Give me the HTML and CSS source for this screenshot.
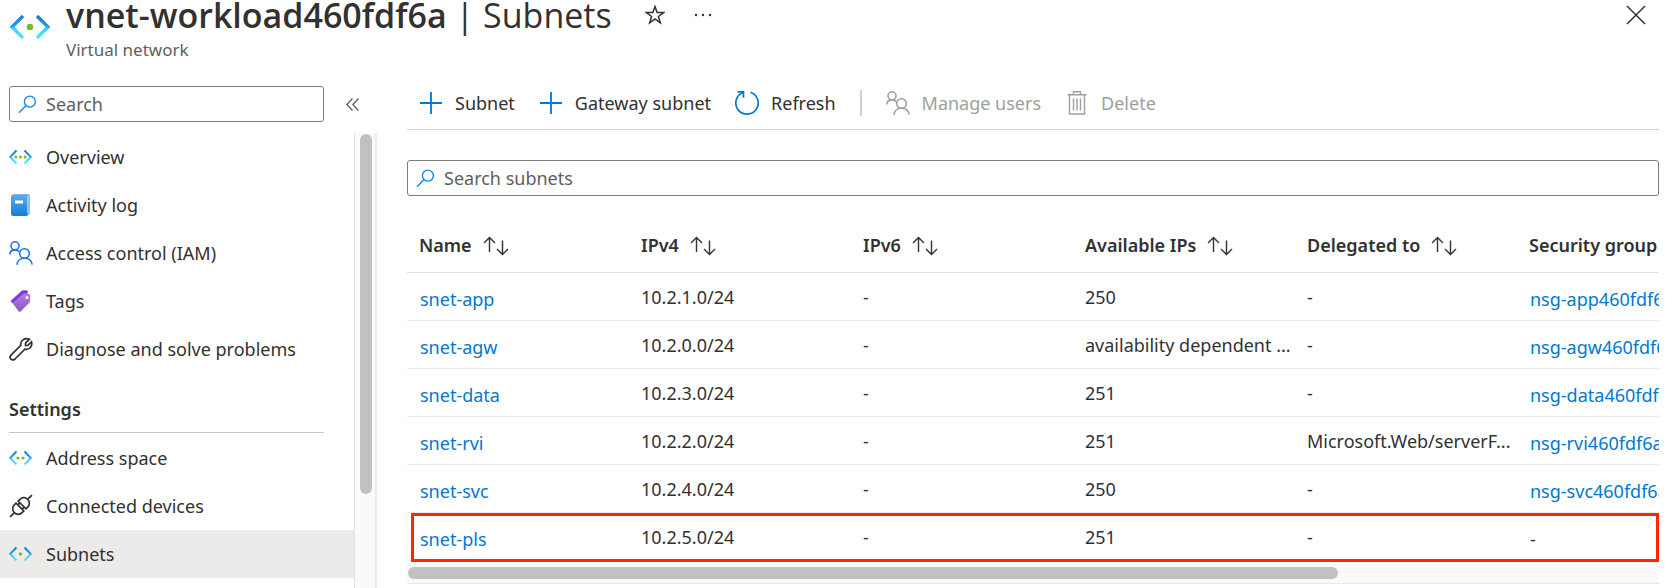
FILE: index.html
```html
<!DOCTYPE html>
<html lang="en">
<head>
<meta charset="utf-8">
<title>vnet-workload460fdf6a | Subnets</title>
<link rel="stylesheet" href="styles.css">
</head>
<body>
<svg class="defs" aria-hidden="true">
  <defs>
    <linearGradient id="bracket" x1="0" y1="0" x2="0" y2="1">
      <stop offset="0" stop-color="#0f7fe0"/><stop offset=".5" stop-color="#2f9cea"/><stop offset=".55" stop-color="#42cdf7"/><stop offset="1" stop-color="#50e6ff"/>
    </linearGradient>
    <linearGradient id="book" x1="0" y1="0" x2="0" y2="1">
      <stop offset="0" stop-color="#5eaaf0"/><stop offset="1" stop-color="#0f80d8"/>
    </linearGradient>
    <linearGradient id="tag" x1="0" y1="0" x2="0" y2="1">
      <stop offset="0" stop-color="#b27fe0"/><stop offset="1" stop-color="#8a55c4"/>
    </linearGradient>
    <symbol id="i-search" viewBox="0 0 20 20"><circle cx="12.5" cy="7" r="5.8" fill="none" stroke="currentColor" stroke-width="1.5"/><path d="M8.3 11.3 1 18.6" fill="none" stroke="currentColor" stroke-width="1.5"/></symbol>
    <symbol id="i-sort" viewBox="0 0 26 20"><path d="M6.5 16V1.5M1 7l5.5-5.5L12 7M19.500 4.500V18.500M14 13l5.500 5.500L25 13" fill="none" stroke="currentColor" stroke-width="1.4"/></symbol>
    <symbol id="i-plus" viewBox="0 0 24 24"><path d="M12 1v22M1 12h22" fill="none" stroke="currentColor" stroke-width="1.8"/></symbol>
    <symbol id="i-users" viewBox="0 0 24 24"><g fill="none" stroke="currentColor" stroke-width="1.6"><circle cx="6" cy="4.800" r="4"/><path d="M.8 13.500C1 10.800 3 8.900 6 8.900c1.700 0 3.200.7 4.200 1.900"/><circle cx="15.500" cy="12.500" r="4.800"/><path d="M8 23.700c.3-3.900 3.300-6.400 7.500-6.400s7.200 2.500 7.700 6.400"/></g></symbol>
  </defs>
</svg>

<header class="header">
  <svg class="header-icon" viewBox="0 0 40 24" aria-hidden="true">
    <path d="M13 1 2 12l11 11M27 1l11 11-11 11" fill="none" stroke="url(#bracket)" stroke-width="3.400"/>
    <circle cx="20" cy="12" r="3.300" fill="#76bc2d"/>
  </svg>
  <div class="header-text">
    <div class="title-row">
      <h1 class="title">vnet-workload460fdf6a <span class="title-page">| Subnets</span></h1>
      <button class="icon-button star" aria-label="Add to favorites"><svg viewBox="0 0 20 20"><path d="M10 1.500 12.100 7.600H18.600L13.400 11.500 15.300 17.900 10 14 4.700 17.900 6.600 11.500 1.400 7.600H7.900Z" fill="none" stroke="currentColor" stroke-width="1.500"/></svg></button>
      <button class="icon-button" aria-label="More"><svg viewBox="0 0 20 20"><g fill="currentColor"><circle cx="3" cy="10" r="1.200"/><circle cx="10" cy="10" r="1.200"/><circle cx="17" cy="10" r="1.200"/></g></svg></button>
    </div>
    <p class="subtitle">Virtual network</p>
  </div>
  <button class="icon-button close" aria-label="Close"><svg viewBox="0 0 20 20"><path d="m1 1 18 18M19 1 1 19" fill="none" stroke="currentColor" stroke-width="1.500"/></svg></button>
</header>

<div class="body">
  <aside class="sidebar">
    <div class="sidebar-top">
      <label class="search"><svg class="search-icon" aria-hidden="true"><use href="#i-search"/></svg><input type="text" placeholder="Search" aria-label="Search"></label>
      <button class="collapse" aria-label="Collapse menu"><svg viewBox="0 0 12 12"><path d="M6 .5.800 6 6 11.500M11.500.5 6.300 6l5.200 5.500" fill="none" stroke="currentColor" stroke-width="1.200"/></svg></button>
    </div>
    <div class="menu">
      <nav class="nav">
        <a class="nav-item" href="#"><svg viewBox="0 0 24 24"><path d="M7.500 5.500 1.200 12 7.500 18.500M15.500 5.500l6.300 6.500-6.300 6.500" fill="none" stroke="url(#bracket)" stroke-width="2"/><g fill="#76bc2d"><circle cx="6.800" cy="12" r="1.500"/><circle cx="11.500" cy="12" r="1.500"/><circle cx="16.200" cy="12" r="1.500"/></g></svg>Overview</a>
        <a class="nav-item" href="#"><svg viewBox="0 0 24 24"><path d="M4 2h16v19H4z" fill="#fff" stroke="#2383d2" stroke-width="1"/><path d="M2 3.500q0-2 2-2h14.500v21.500H4q-2 0-2-2z" fill="url(#book)"/><path d="M6 7.500h8v3H6z" fill="#fff"/></svg>Activity log</a>
        <a class="nav-item iam" href="#"><svg><use href="#i-users"/></svg>Access control (IAM)</a>
        <a class="nav-item" href="#"><svg viewBox="0 0 24 24"><path d="M1.500 12 12.500 2q1-.8 2.500-.7l3 .3q1 .2 1 1.200L10.500 21z" fill="#773adc"/><path d="M3.500 14 14 5q1-.8 2.200-.6l3.800.6q1.300.2 1.300 1.400l-.2 5.600q0 1-.7 1.700L11.500 22.500q-1 .8-1.800 0z" fill="url(#tag)"/><circle cx="18" cy="8.500" r="1.500" fill="#fff"/></svg>Tags</a>
        <a class="nav-item" href="#"><svg viewBox="0 0 24 24"><path d="M20.500 2.200 16.500 6.200v2.300h2.300l3.700-3.700c1.300 4.400-2.300 8.400-6.600 7.300L6 22c-2.800 2.500-6.500-1-4-3.900l9.800-9.800C10.800 4 15.500.2 20.500 2.200Z" fill="none" stroke="currentColor" stroke-width="1.700"/></svg>Diagnose and solve problems</a>
        <h2 class="nav-heading">Settings</h2>
        <a class="nav-item" href="#"><svg viewBox="0 0 24 24"><path d="M7.500 5.500 1.200 12 7.500 18.500M15.500 5.500l6.300 6.500-6.300 6.500" fill="none" stroke="url(#bracket)" stroke-width="2"/><g fill="#76bc2d"><circle cx="8.900" cy="12" r="1.600"/><circle cx="14.100" cy="12" r="1.600"/></g></svg>Address space</a>
        <a class="nav-item" href="#"><svg viewBox="0 0 24 24"><g transform="rotate(-45 12 12)" fill="none" stroke="currentColor" stroke-width="1.700"><path d="M-3.500 12H2M22 12h5.500"/><path d="M10.500 6.500H8A5.500 5.500 0 0 0 8 17.500h2.500zM13.500 6.500H16a5.500 5.500 0 0 1 0 11h-2.500zM10.500 9h3M10.500 15h3"/></g></svg>Connected devices</a>
        <a class="nav-item selected" href="#" aria-current="page"><svg viewBox="0 0 24 24"><path d="M7.500 5.500 1.200 12 7.500 18.500M15.500 5.500l6.300 6.500-6.300 6.500" fill="none" stroke="url(#bracket)" stroke-width="2"/><circle cx="11.500" cy="12" r="1.700" fill="#76bc2d"/></svg>Subnets</a>
      </nav>
      <div class="vscroll"><div class="vthumb"></div></div>
    </div>
  </aside>

  <main class="main">
    <div class="toolbar">
      <button class="tool"><svg><use href="#i-plus"/></svg>Subnet</button>
      <button class="tool"><svg><use href="#i-plus"/></svg>Gateway subnet</button>
      <button class="tool"><svg viewBox="0 0 24 24"><path d="M15.500 1.300A11.200 11.200 0 1 1 7.500 1.700M2.500.8h6v6" fill="none" stroke="currentColor" stroke-width="1.700"/></svg>Refresh</button>
      <span class="divider"></span>
      <button class="tool" disabled><svg><use href="#i-users"/></svg>Manage users</button>
      <button class="tool" disabled><svg viewBox="0 0 24 24"><path d="M2.500 3.800h19M4.500 4v19h15V4M8.500 3.500V.8h7v2.700M8.500 7.500v12M12 7.500v12M15.500 7.500v12" fill="none" stroke="currentColor" stroke-width="1.400"/></svg>Delete</button>
    </div>
    <label class="search"><svg class="search-icon" aria-hidden="true"><use href="#i-search"/></svg><input type="text" placeholder="Search subnets" aria-label="Search subnets"></label>
    <div class="grid">
      <table class="table">
        <thead>
          <tr>
            <th scope="col">Name<svg><use href="#i-sort"/></svg></th>
            <th scope="col">IPv4<svg><use href="#i-sort"/></svg></th>
            <th scope="col">IPv6<svg><use href="#i-sort"/></svg></th>
            <th scope="col">Available IPs<svg><use href="#i-sort"/></svg></th>
            <th scope="col">Delegated to<svg><use href="#i-sort"/></svg></th>
            <th scope="col">Security group</th>
          </tr>
        </thead>
        <tbody>
          <tr><td class="linked"><a href="#">snet-app</a></td><td>10.2.1.0/24</td><td>-</td><td>250</td><td>-</td><td class="linked"><a href="#">nsg-app460fdf6a</a></td></tr>
          <tr><td class="linked"><a href="#">snet-agw</a></td><td>10.2.0.0/24</td><td>-</td><td>availability dependent ...</td><td>-</td><td class="linked"><a href="#">nsg-agw460fdf6a</a></td></tr>
          <tr><td class="linked"><a href="#">snet-data</a></td><td>10.2.3.0/24</td><td>-</td><td>251</td><td>-</td><td class="linked"><a href="#">nsg-data460fdf6a</a></td></tr>
          <tr><td class="linked"><a href="#">snet-rvi</a></td><td>10.2.2.0/24</td><td>-</td><td>251</td><td>Microsoft.Web/serverF...</td><td class="linked"><a href="#">nsg-rvi460fdf6a</a></td></tr>
          <tr><td class="linked"><a href="#">snet-svc</a></td><td>10.2.4.0/24</td><td>-</td><td>250</td><td>-</td><td class="linked"><a href="#">nsg-svc460fdf6a</a></td></tr>
          <tr><td class="linked"><a href="#">snet-pls</a></td><td>10.2.5.0/24</td><td>-</td><td>251</td><td>-</td><td class="linked">-</td></tr>
        </tbody>
      </table>
      <div class="highlight"></div>
    </div>
    <div class="hscroll"><div class="hthumb"></div></div>
  </main>
</div>
</body>
</html>
```
FILE: styles.css
```css
* { box-sizing: border-box; }

body {
  margin: 0;
  height: 100vh;
  overflow: hidden;
  display: flex;
  flex-direction: column;
  background: #fff;
  color: #323130;
  font-family: "Noto Sans", "Open Sans", sans-serif;
  font-size: 18px;
  line-height: 24px;
}

button, input { font: inherit; color: inherit; }
button { padding: 0; border: 0; background: none; }
a { color: #0078d4; text-decoration: none; }
svg { display: block; flex: none; }
.defs { position: absolute; width: 0; height: 0; }

.header {
  display: flex;
  gap: 16px;
  height: 86px;
  padding: 0 30px 0 10px;
}
.header-icon { width: 40px; height: 24px; margin-top: 15px; }
.header-text { flex: 1; }
.title-row { display: flex; align-items: center; gap: 28px; height: 30px; }
.title { margin: 0; font-family: "Open Sans", "Noto Sans", sans-serif; font-size: 34px; line-height: 28px; font-weight: 600; white-space: nowrap; }
.title-page { font-weight: 400; }
.subtitle { margin: 8px 0 0; font-size: 17px; color: #605e5c; }
.icon-button { width: 20px; height: 20px; }
.icon-button svg { width: 20px; height: 20px; }
.star { margin-left: 5px; }
.close { margin-top: 5px; }

.body { flex: 1; display: flex; gap: 30px; min-height: 0; }
.sidebar { flex: none; width: 377px; display: flex; flex-direction: column; }
.sidebar-top { display: flex; align-items: center; gap: 22px; padding-left: 9px; height: 36px; margin-bottom: 11px; }
.sidebar-top .search { width: 315px; }
.collapse svg { width: 13px; height: 13px; color: #605e5c; }

.search {
  display: flex;
  align-items: center;
  gap: 9px;
  height: 36px;
  padding: 0 8px;
  border: 1px solid #7f7d7b;
  border-radius: 3px;
}
.search-icon { width: 19px; height: 19px; color: #1a86de; }
.search input { flex: 1; min-width: 0; padding: 0; border: 0; outline: 0; background: none; }
.search input::placeholder { color: #605e5c; opacity: 1; }

.menu { flex: 1; display: flex; min-height: 0; }
.nav { flex: 1; }
.nav-item {
  display: flex;
  align-items: center;
  gap: 13px;
  height: 48px;
  padding-left: 9px;
  color: #323130;
}
.nav-item svg { width: 24px; height: 24px; }
.iam svg { color: #1f74e8; }
.selected { background: #edebe9; }
.nav-heading {
  margin: 0 30px 1px 9px;
  height: 60px;
  padding-top: 24px;
  border-bottom: 1px solid #c8c6c4;
  font-size: 18px;
  line-height: 24px;
  font-weight: 600;
}
.vscroll { width: 23px; padding: 1px 4px 0 5px; background: #fafafa; border-left: 1px solid #e4e4e4; border-right: 2px solid #ececec; }
.vthumb { width: 12px; height: 360px; border-radius: 6px; background: #c1c1c1; }

.main { flex: 1; min-width: 0; margin-right: 17px; }
.toolbar {
  display: flex;
  align-items: center;
  gap: 24px;
  height: 44px;
  padding: 0 12px 10px;
  border-bottom: 1px solid #d2d0ce;
  margin-bottom: 30px;
}
.tool { display: flex; align-items: center; gap: 12px; white-space: nowrap; }
.tool svg { width: 24px; height: 24px; color: #0078d4; }
.tool:disabled, .tool:disabled svg { color: #a19f9d; }
.divider { width: 2px; height: 26px; background: #d2d0ce; }

.grid { position: relative; overflow: hidden; margin-top: 21px; padding-bottom: 1px; }
.table { width: 1332px; table-layout: fixed; border-collapse: collapse; }
.table th, .table td {
  height: 48px;
  padding: 2px 0 0 12px;
  border-bottom: 1px solid #edebe9;
  text-align: left;
  white-space: nowrap;
}
.table th { height: 55px; font-weight: 600; border-color: #e1dfdd; }
.table th svg { display: inline-block; width: 26px; height: 20px; margin-left: 11px; vertical-align: -4px; }
.table td.linked { padding: 6px 0 0 13px; }
.highlight { position: absolute; left: 4px; right: 0; bottom: 0; height: 49px; border: 3px solid #ff2600; }

.hscroll { height: 22px; padding: 5px 1px 0; background: #fafafa; border-bottom: 1px solid #e8e8e8; }
.hthumb { width: 74.4%; height: 12px; border-radius: 6px; background: #c1c1c1; }
```
